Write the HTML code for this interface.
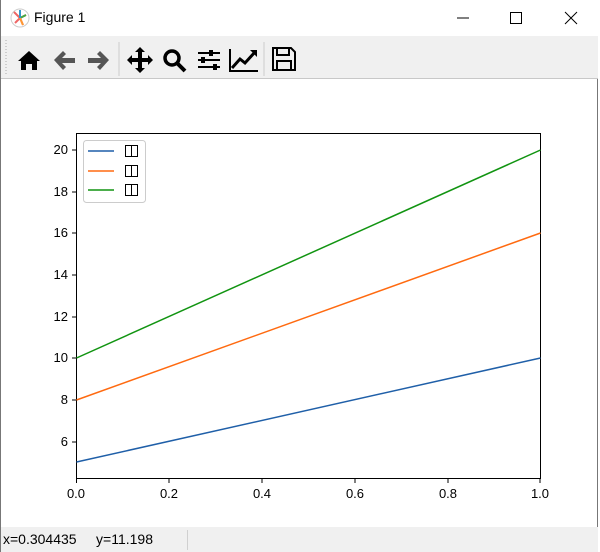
<!DOCTYPE html>
<html><head><meta charset="utf-8"><style>
*{margin:0;padding:0;box-sizing:border-box}
body{width:600px;height:552px;background:#fff;position:relative;overflow:hidden;font-family:"Liberation Sans","DejaVu Sans",sans-serif}
#win{position:absolute;left:0;top:0;width:598px;height:552px;border:1px solid #777;border-top:none;background:#fff}
#title{position:absolute;left:0;top:0;width:597px;height:36px;background:#fff}
#title span{position:absolute;left:33px;top:9px;font-size:14px;color:#000}
#tb{position:absolute;left:0;top:36px;width:597px;height:43px;background:#f0f0f0;border-bottom:1px solid #c8c8c8}
#status{position:absolute;left:0;top:527px;width:597px;height:25px;background:#f0f0f0;font-size:14px}
</style></head><body>
<div id="win">
<div id="title">
<svg width="22" height="22" style="position:absolute;left:8px;top:7px" viewBox="0 0 22 22">
<circle cx="11" cy="11" r="9" fill="#fff" stroke="#ccc"/>
<path d="M11 11 L5 5 M11 11 L17 8 M11 11 L14 18 M11 11 L6 16 M11 11 L11 3" stroke="#e66" stroke-width="2"/>
<path d="M11 11 L17 8" stroke="#4a4" stroke-width="2"/><path d="M11 11 L14 18" stroke="#f93" stroke-width="2"/><path d="M11 11 L11 3" stroke="#39c" stroke-width="2"/>
</svg>
<span>Figure 1</span>
<svg width="180" height="36" style="position:absolute;left:420px;top:0">
<line x1="36" y1="18" x2="48" y2="18" stroke="#000"/>
<rect x="89.5" y="12.5" width="11" height="11" fill="none" stroke="#000"/>
<path d="M144 12 L156 24 M156 12 L144 24" stroke="#000"/>
</svg>
</div>
<div id="tb">
<svg width="300" height="43" viewBox="0 36 300 43" style="position:absolute;left:0;top:0">
<line x1="5" y1="40" x2="5" y2="75" stroke="#aaa" stroke-dasharray="1 2"/>
<path d="M17 61 L28 51 L39 61 L36 61 L36 70 L31 70 L31 64 L25 64 L25 70 L20 70 L20 61 Z" fill="#000"/>
<path d="M53 60 L62 51 L65 54 L61 58 L74 58 L74 63 L61 63 L65 67 L62 70 Z" fill="#555"/>
<path d="M108 60 L99 51 L96 54 L100 58 L87 58 L87 63 L100 63 L96 67 L99 70 Z" fill="#555"/>
<line x1="118" y1="42" x2="118" y2="76" stroke="#ccc"/>
<path d="M139 47 L144 52 L141 52 L141 58 L147 58 L147 55 L152 60 L147 65 L147 62 L141 62 L141 68 L144 68 L139 73 L134 68 L137 68 L137 62 L131 62 L131 65 L126 60 L131 55 L131 58 L137 58 L137 52 L134 52 Z" fill="#000"/>
<circle cx="171" cy="58" r="7" fill="none" stroke="#000" stroke-width="3.5"/>
<line x1="176" y1="63" x2="184" y2="71" stroke="#000" stroke-width="4"/>
<path d="M197 53h22M197 60h22M197 67h22" stroke="#000" stroke-width="2"/>
<rect x="208" y="50" width="4" height="6" fill="#000"/><rect x="200" y="57" width="4" height="6" fill="#000"/><rect x="212" y="64" width="4" height="6" fill="#000"/>
<path d="M229 49 L229 71 L257 71" fill="none" stroke="#000" stroke-width="2"/>
<path d="M231 68 L239 59 L244 63 L254 52" fill="none" stroke="#000" stroke-width="3"/>
<path d="M249 50 L256 50 L256 57 Z" fill="#000"/>
<line x1="263" y1="42" x2="263" y2="76" stroke="#ccc"/>
<path d="M272 48 L290 48 L294 52 L294 70 L272 70 Z" fill="none" stroke="#000" stroke-width="2"/>
<rect x="276" y="48" width="12" height="7" fill="none" stroke="#000" stroke-width="2"/>
<rect x="276" y="61" width="14" height="9" fill="none" stroke="#000" stroke-width="2"/>
</svg>
</div>
<svg width="598" height="447" viewBox="0 80 598 447" style="position:absolute;left:0;top:80px;font-family:'Liberation Sans','DejaVu Sans',sans-serif;font-size:13px">
<rect x="75.5" y="133.5" width="464" height="345" fill="#fff" stroke="#000"/>
<polyline points="75.5,462 539.5,358" fill="none" stroke="#1f5fa8" stroke-width="1.5"/>
<polyline points="75.5,400 539.5,233" fill="none" stroke="#ff6a10" stroke-width="1.5"/>
<polyline points="75.5,358 539.5,150" fill="none" stroke="#119411" stroke-width="1.5"/>
<g stroke="#000">
<line x1="71" y1="442" x2="75" y2="442"/><line x1="71" y1="400" x2="75" y2="400"/><line x1="71" y1="358" x2="75" y2="358"/>
<line x1="71" y1="317" x2="75" y2="317"/><line x1="71" y1="275" x2="75" y2="275"/><line x1="71" y1="233" x2="75" y2="233"/>
<line x1="71" y1="192" x2="75" y2="192"/><line x1="71" y1="150" x2="75" y2="150"/>
<line x1="75.5" y1="479" x2="75.5" y2="483"/><line x1="168" y1="479" x2="168" y2="483"/><line x1="261" y1="479" x2="261" y2="483"/>
<line x1="354" y1="479" x2="354" y2="483"/><line x1="447" y1="479" x2="447" y2="483"/><line x1="539" y1="479" x2="539" y2="483"/>
</g>
<g text-anchor="end">
<text x="67" y="446">6</text><text x="67" y="404">8</text><text x="67" y="362">10</text><text x="67" y="321">12</text>
<text x="67" y="279">14</text><text x="67" y="237">16</text><text x="67" y="196">18</text><text x="67" y="154">20</text>
</g>
<g text-anchor="middle">
<text x="75" y="498">0.0</text><text x="168" y="498">0.2</text><text x="261" y="498">0.4</text>
<text x="354" y="498">0.6</text><text x="447" y="498">0.8</text><text x="539" y="498">1.0</text>
</g>
<rect x="82.5" y="140.5" width="62" height="62" rx="3" fill="#fff" stroke="#ccc"/>
<line x1="87" y1="151" x2="113" y2="151" stroke="#1f5fa8" stroke-width="1.5"/>
<line x1="87" y1="171" x2="113" y2="171" stroke="#ff6a10" stroke-width="1.5"/>
<line x1="87" y1="190" x2="113" y2="190" stroke="#119411" stroke-width="1.5"/>
<g fill="none" stroke="#000"><rect x="124.5" y="145.5" width="6" height="11"/><rect x="130.5" y="145.5" width="6" height="11"/>
<rect x="124.5" y="165.5" width="6" height="11"/><rect x="130.5" y="165.5" width="6" height="11"/>
<rect x="124.5" y="184.5" width="6" height="11"/><rect x="130.5" y="184.5" width="6" height="11"/></g>
</svg>
<div id="status"><span style="position:absolute;left:2px;top:4px">x=0.304435&nbsp;&nbsp;&nbsp;&nbsp; y=11.198</span>
<div style="position:absolute;left:186px;top:3px;width:1px;height:20px;background:#d0d0d0"></div></div>
</div>
</body></html>
